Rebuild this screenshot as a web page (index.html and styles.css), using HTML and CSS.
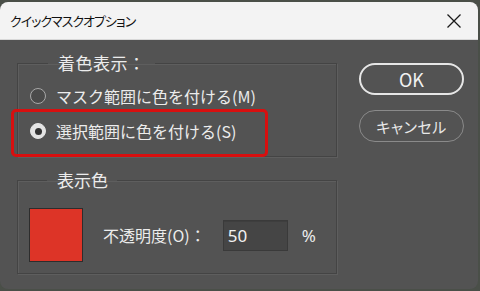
FILE: index.html
```html
<!DOCTYPE html>
<html lang="ja">
<head>
<meta charset="utf-8">
<link rel="stylesheet" href="styles.css">
</head>
<body>
<div class="window">
  <div class="titlebar">
    <span class="title">クイックマスクオプション</span>
    <svg class="close" width="16" height="16" viewBox="0 0 16 16"><path d="M1.5 1.5 L14.5 14.5 M14.5 1.5 L1.5 14.5" stroke="#1a1a1a" stroke-width="1.3" fill="none"/></svg>
  </div>
  <div class="content">
    <div class="groups">
      <fieldset class="group group-mode">
        <legend>着色表示：</legend>
        <label class="radio-row"><span class="radio"></span><span>マスク範囲に色を付ける(M)</span></label>
        <label class="radio-row"><span class="radio checked"></span><span>選択範囲に色を付ける(S)</span></label>
      </fieldset>
      <fieldset class="group group-color">
        <legend>表示色</legend>
        <div class="color-row">
          <span class="swatch"></span>
          <span class="opacity-label">不透明度(O)：</span>
          <span class="input">50</span>
          <span class="pct">%</span>
        </div>
      </fieldset>
    </div>
    <div class="buttons">
      <button class="btn btn-primary">OK</button>
      <button class="btn btn-cancel">キャンセル</button>
    </div>
  </div>
  <div class="highlight"></div>
</div>
</body>
</html>
```

FILE: styles.css
```css
* { box-sizing: border-box; }
html, body {
  margin: 0;
  padding: 0;
  width: 480px;
  height: 291px;
  overflow: hidden;
  background: #4a4f48;
  font-family: "Noto Sans CJK JP", "Noto Sans", sans-serif;
}
.window {
  position: relative;
  margin-top: 2px;
  width: 478px;
  height: 287px;
  border-radius: 8px;
  overflow: hidden;
  background: #535353;
}
.titlebar {
  height: 38px;
  background: #f3f3f3;
  display: flex;
  align-items: center;
  justify-content: space-between;
  padding: 0 16px 0 10px;
  border-bottom: 1px solid #d8d8d8;
}
.title {
  font-size: 13px;
  letter-spacing: -1px;
  font-feature-settings: "palt";
  color: #111;
}
.close { display: block; }
.content {
  display: flex;
  padding: 12px 0 0 17px;
}
.groups {
  display: flex;
  flex-direction: column;
  gap: 12px;
  width: 320px;
}
.group {
  margin: 0;
  padding: 0;
  border: 1px solid #444;
  box-shadow: 1px 1px 0 #5e5e5e, inset 1px 1px 0 #5e5e5e;
  min-width: 0;
}
.group legend {
  margin-left: 18px;
  padding: 0 9px 0 10px;
  font-size: 17px;
  line-height: 22px;
  color: #ececec;
}
.group-mode legend { letter-spacing: 0.5px; }
.group-mode {
  height: 105px;
  padding: 10px 0 0 12px;
  display: flex;
  flex-direction: column;
  gap: 11px;
}
.radio-row {
  display: flex;
  align-items: center;
  gap: 10px;
  font-size: 16px;
  line-height: 24px;
  color: #ececec;
}
.radio {
  width: 16px;
  height: 16px;
  border-radius: 50%;
  border: 1.5px solid #a8a8a8;
  background: #4a4a4a;
  display: flex;
  align-items: center;
  justify-content: center;
}
.radio.checked {
  background: #e4e4e4;
  border-color: #e4e4e4;
}
.radio.checked::after {
  content: "";
  width: 7px;
  height: 7px;
  border-radius: 50%;
  background: #333;
}
.group-color {
  height: 105px;
  padding: 17px 0 0 11px;
}
.color-row {
  display: flex;
  align-items: center;
}
.swatch {
  width: 54px;
  height: 54px;
  background: #dd3427;
  border: 1px solid #2d2d2d;
}
.opacity-label {
  margin-left: 20px;
  font-size: 16px;
  color: #ececec;
}
.input {
  margin-left: 17px;
  width: 65px;
  height: 31px;
  background: #454545;
  border: 1px solid #3a3a3a;
  box-shadow: inset 0 1px 0 #3e3e3e;
  color: #f2f2f2;
  font-size: 17px;
  line-height: 29px;
  padding-left: 4px;
  font-family: "Noto Sans", "Noto Sans CJK JP", sans-serif;
}
.pct {
  margin-left: 14px;
  font-size: 17px;
  color: #ececec;
  font-family: "Noto Sans", sans-serif;
}
.buttons {
  margin-left: 22px;
  padding-top: 11px;
  display: flex;
  flex-direction: column;
  gap: 15px;
}
.btn {
  width: 105px;
  height: 32px;
  border-radius: 16px;
  background: transparent;
  border: 1.5px solid #8a8a8a;
  color: #e8e8e8;
  font-family: "Noto Sans CJK JP", "Noto Sans", sans-serif;
  font-size: 16px;
  padding: 0;
}
.btn-cancel {
  font-size: 15px;
  font-feature-settings: "palt";
  letter-spacing: 0.5px;
}
.btn-primary {
  border: 2px solid #e6e6e6;
  font-size: 18px;
  color: #f0f0f0;
}
.highlight {
  position: absolute;
  left: 11px;
  top: 107px;
  width: 257px;
  height: 48px;
  border: 3px solid #d80f0f;
  border-radius: 5px;
  pointer-events: none;
}
```
